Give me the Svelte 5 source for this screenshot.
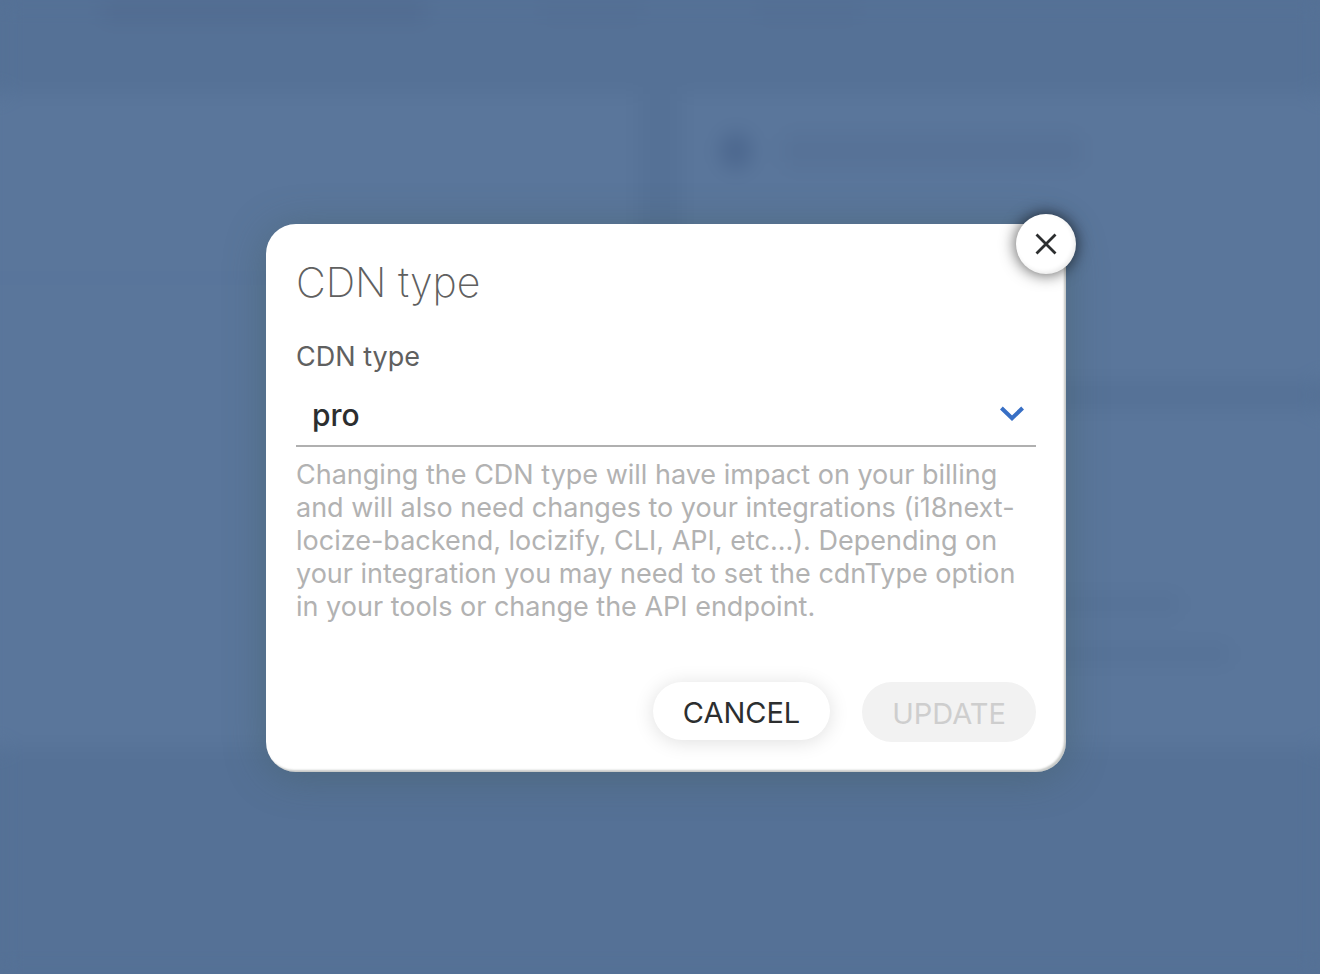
<script>
  let open = $state(true);
  let cdnType = $state('pro');
  const current = 'pro';
  const types = ['pro', 'standard'];
</script>

<main class="stage">
  <div class="page" aria-hidden="true">
    <div class="tabs">
      <span class="smudge tab wide"></span>
      <span class="smudge tab"></span>
      <span class="smudge tab"></span>
    </div>
    <div class="panels">
      <div class="panel tall"><div class="divider"></div></div>
      <div class="column">
        <div class="panel top">
          <span class="dot"></span>
          <span class="smudge heading"></span>
        </div>
        <div class="panel bottom">
          <span class="smudge line"></span>
          <span class="smudge line long"></span>
        </div>
      </div>
    </div>
  </div>

  {#if open}
    <div class="dialog" role="dialog" aria-modal="true" aria-labelledby="dialog-title">
      <button class="close" type="button" aria-label="Close" onclick={() => (open = false)}>
        <svg viewBox="0 0 24 24" width="24" height="24" aria-hidden="true">
          <path d="M2.5 2.5 21.5 21.5M21.5 2.5 2.5 21.5" fill="none" stroke="#2c2e2f" stroke-width="2.8" />
        </svg>
      </button>

      <h1 id="dialog-title">CDN type</h1>

      <label for="cdn-type">CDN type</label>
      <div class="field">
        <select id="cdn-type" bind:value={cdnType} aria-describedby="cdn-help">
          {#each types as type}
            <option value={type}>{type}</option>
          {/each}
        </select>
        <svg class="chevron" viewBox="0 0 24 16" width="24" height="16" aria-hidden="true">
          <path d="M1.4 2 12 12.2 22.6 2" fill="none" stroke="#386fc5" stroke-width="4" />
        </svg>
      </div>
      <p id="cdn-help">
        Changing the CDN type will have impact on your billing and will also need changes to your
        integrations (i18next-locize-backend, locizify, CLI, API, etc...). Depending on your
        integration you may need to set the cdnType option in your tools or change the API endpoint.
      </p>

      <div class="actions">
        <button class="cancel" type="button" onclick={() => (open = false)}>CANCEL</button>
        <button class="update" type="button" disabled={cdnType === current}>UPDATE</button>
      </div>
    </div>
  {/if}
</main>

<style>
  :global(body) {
    margin: 0;
    background: #557196;
  }

  .stage {
    box-sizing: border-box;
    position: relative;
    min-height: 100vh;
    display: flex;
    align-items: center;
    justify-content: center;
    padding: 22px 0 0 12px;
    overflow: hidden;
    font-family: Inter, "Liberation Sans", sans-serif;
  }

  /* Dimmed, out-of-focus page behind the dialog */
  .page {
    position: absolute;
    inset: 0;
    display: flex;
    flex-direction: column;
    filter: blur(10px);
    background: #557196;
  }

  .tabs {
    display: flex;
    gap: 112px;
    height: 94px;
    padding-left: 100px;
  }

  .smudge {
    display: block;
    border-radius: 10px;
    background: #546f94;
  }

  .tab {
    width: 104px;
    height: 22px;
  }

  .tab.wide {
    width: 328px;
    background: #526c91;
  }

  .panels {
    display: grid;
    grid-template-columns: 1fr 1fr;
    gap: 44px;
    height: 67%;
    margin: 0 -20px;
  }

  .column {
    display: grid;
    grid-template-rows: 46fr 54fr;
    gap: 28px;
  }

  .panel {
    background: #5a769b;
  }

  .panel.tall {
    padding-top: 180px;
  }

  .divider {
    height: 8px;
    background: #58749a;
  }

  .panel.top {
    display: flex;
    gap: 30px;
    padding: 38px;
  }

  .dot {
    width: 32px;
    height: 38px;
    border-radius: 50%;
    background: #4c678e;
  }

  .heading {
    width: 300px;
    height: 38px;
    background: #577297;
  }

  .panel.bottom {
    display: flex;
    flex-direction: column;
    gap: 28px;
    padding: 184px 40px 0;
  }

  .line {
    width: 460px;
    height: 22px;
    background: #567297;
  }

  .line.long {
    width: 510px;
  }

  .dialog {
    box-sizing: border-box;
    position: relative;
    width: min(800px, calc(100% - 40px));
    padding: 30px;
    border-radius: 30px;
    background: #fff;
    box-shadow:
      0 4px 40px rgba(65, 92, 90, 0.45),
      inset -2px -2px 2px rgba(70, 75, 70, 0.3);
  }

  .close {
    position: absolute;
    top: -10px;
    right: -10px;
    width: 60px;
    height: 60px;
    display: flex;
    align-items: center;
    justify-content: center;
    padding: 0;
    border: 0;
    border-radius: 50%;
    background: #fff;
    box-shadow:
      0 0 16px rgba(0, 0, 0, 0.7),
      inset -2px -2px 4px rgba(0, 0, 0, 0.08);
  }

  h1 {
    margin: 0;
    color: #606060;
    font-size: 41px;
    font-weight: 200;
    line-height: 56px;
  }

  label {
    display: block;
    margin-top: 30px;
    color: #606060;
    font-size: 27px;
    line-height: 34px;
  }

  .field {
    position: relative;
    margin-top: 10px;
    border-bottom: 2px solid #b0b0b0;
  }

  select {
    appearance: none;
    display: block;
    width: 100%;
    height: 61px;
    padding: 0 48px 0 16px;
    border: 0;
    background: transparent;
    color: #2c2e2f;
    font: 500 30px Inter, "Liberation Sans", sans-serif;
  }

  .chevron {
    position: absolute;
    top: 22px;
    right: 12px;
    pointer-events: none;
  }

  p {
    margin: 11px 0 0;
    color: #b2b2b2;
    font-size: 27px;
    line-height: 33px;
  }

  .actions {
    display: flex;
    justify-content: flex-end;
    align-items: flex-start;
    gap: 32px;
    margin-top: 59px;
  }

  .actions button {
    height: 60px;
    padding: 2px 30px 0;
    border: 0;
    border-radius: 30px;
    font: 400 29px Inter, "Liberation Sans", sans-serif;
  }

  .actions .cancel {
    height: 58px;
    background: #fff;
    color: #2c2e2f;
    box-shadow: 0 2px 20px rgba(0, 0, 0, 0.13);
  }

  .actions .update {
    background: #f2f2f2;
    color: #cecece;
  }
</style>
